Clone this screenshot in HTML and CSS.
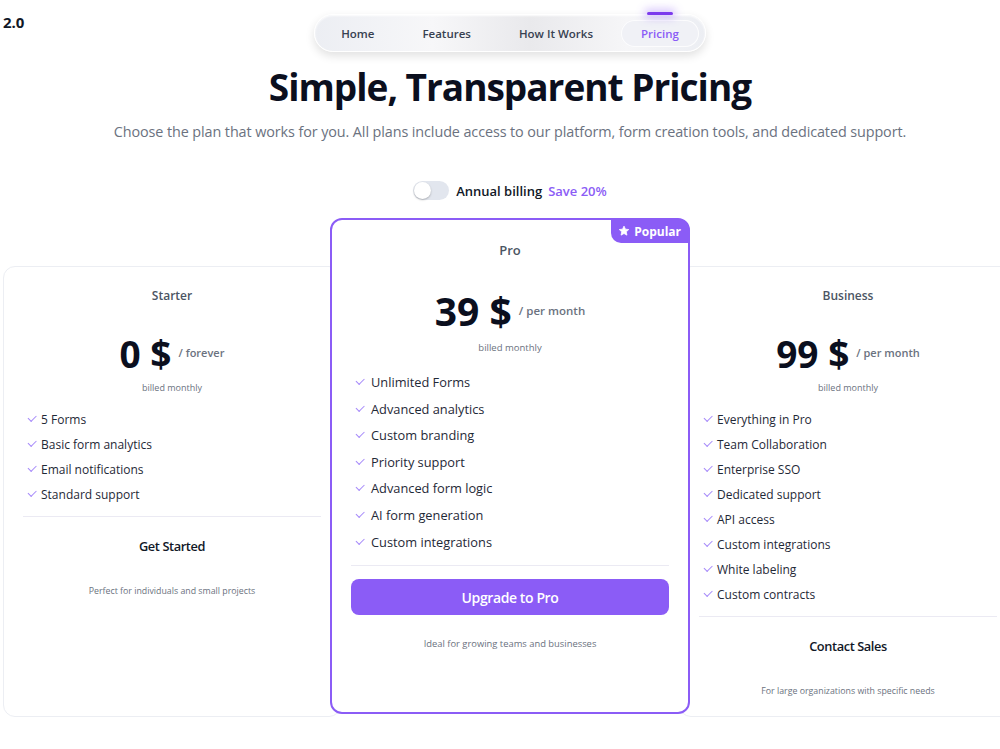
FILE: index.html
```html
<!DOCTYPE html>
<html lang="en">
<head>
    <meta charset="UTF-8">
    <meta name="viewport" content="width=device-width, initial-scale=1.0">
    <title>Pricing</title>
    <link rel="stylesheet" href="styles.css">
</head>
<body>
    <div class="version">2.0</div>

    <div class="page">
        <nav class="nav">
            <a href="#" class="nav-link">Home</a>
            <a href="#" class="nav-link">Features</a>
            <a href="#" class="nav-link">How It Works</a>
            <a href="#" class="nav-link active">Pricing</a>
        </nav>

        <section class="pricing">
            <h1>Simple, Transparent Pricing</h1>
            <p class="subtitle">Choose the plan that works for you. All plans include access to our platform, form creation tools, and dedicated support.</p>

            <div class="billing">
                <span class="switch"><span class="knob"></span></span>
                <span class="billing-label">Annual billing</span>
                <span class="save">Save 20%</span>
            </div>

            <div class="plans">
                <div class="plan">
                    <div class="plan-name">Starter</div>
                    <div class="price"><span class="amount">0 $</span><span class="period">/ forever</span></div>
                    <div class="billed">billed monthly</div>
                    <ul class="features">
                        <li>5 Forms</li>
                        <li>Basic form analytics</li>
                        <li>Email notifications</li>
                        <li>Standard support</li>
                    </ul>
                    <button class="plan-btn">Get Started</button>
                    <p class="plan-note">Perfect for individuals and small projects</p>
                </div>

                <div class="plan plan-pro">
                    <div class="badge">
                        <svg width="12" height="12" viewBox="0 0 24 24"><path fill="#fff" d="M12 2.2l2.9 6.1 6.6.8-4.9 4.6 1.3 6.6L12 17l-5.9 3.3 1.3-6.6-4.9-4.6 6.6-.8z" stroke="#fff" stroke-width="1.5" stroke-linejoin="round"/></svg>
                        Popular
                    </div>
                    <div class="plan-name">Pro</div>
                    <div class="price"><span class="amount">39 $</span><span class="period">/ per month</span></div>
                    <div class="billed">billed monthly</div>
                    <ul class="features">
                        <li>Unlimited Forms</li>
                        <li>Advanced analytics</li>
                        <li>Custom branding</li>
                        <li>Priority support</li>
                        <li>Advanced form logic</li>
                        <li>AI form generation</li>
                        <li>Custom integrations</li>
                    </ul>
                    <button class="plan-btn primary">Upgrade to Pro</button>
                    <p class="plan-note">Ideal for growing teams and businesses</p>
                </div>

                <div class="plan">
                    <div class="plan-name">Business</div>
                    <div class="price"><span class="amount">99 $</span><span class="period">/ per month</span></div>
                    <div class="billed">billed monthly</div>
                    <ul class="features">
                        <li>Everything in Pro</li>
                        <li>Team Collaboration</li>
                        <li>Enterprise SSO</li>
                        <li>Dedicated support</li>
                        <li>API access</li>
                        <li>Custom integrations</li>
                        <li>White labeling</li>
                        <li>Custom contracts</li>
                    </ul>
                    <button class="plan-btn">Contact Sales</button>
                    <p class="plan-note">For large organizations with specific needs</p>
                </div>
            </div>
        </section>
    </div>
</body>
</html>
```

FILE: styles.css
```css
html, body {
    overflow: hidden;
}
body {
    margin: 0;
    font-family: "Open Sans", sans-serif;
    color: #111827;
    background: #fff;
}
.page {
    width: 1020px;
}
.version {
    position: absolute;
    top: 12px;
    left: 3px;
    font-size: 15px;
    font-weight: 700;
}

/* top navigation pill */
.nav {
    display: flex;
    align-items: center;
    gap: 8px;
    width: fit-content;
    height: 28px;
    margin: 14px auto 0;
    padding: 4px 6px;
    border-radius: 20px;
    background: linear-gradient(90deg, #eceef3, #f7f7f9 30%, #e9e9ec 55%, #f6f6f8 80%, #eceef3);
    border: 1px solid #fff;
    box-shadow: 0 4px 10px rgba(0, 0, 0, 0.12), inset 0 1px 2px rgba(255, 255, 255, 0.9);
}
.nav-link {
    position: relative;
    padding: 6px 20px;
    font-size: 11.5px;
    font-weight: 600;
    color: #374151;
    text-decoration: none;
    border-radius: 16px;
}
.nav-link.active {
    color: #8b5cf6;
    background: #f0f1f6;
    box-shadow: inset 0 0 0 1px rgba(255, 255, 255, 0.8);
}
.nav-link.active::before {
    content: "";
    position: absolute;
    top: -8px;
    left: 50%;
    width: 26px;
    height: 3px;
    margin-left: -13px;
    border-radius: 2px;
    background: #7c3aed;
    box-shadow: 0 0 8px 3px rgba(139, 92, 246, 0.35);
}

.pricing {
    text-align: center;
}
h1 {
    margin: 12px 0 0;
    font-size: 37px;
    font-weight: 700;
    letter-spacing: -1px;
    line-height: 46px;
    color: #0b0f1e;
}
.subtitle {
    margin: 12px 0 0;
    font-size: 14.4px;
    color: #6b7280;
    letter-spacing: -0.1px;
}

/* billing toggle */
.billing {
    display: flex;
    justify-content: center;
    align-items: center;
    gap: 6px;
    margin-top: 40px;
    font-size: 13px;
    font-weight: 600;
}
.switch {
    display: inline-flex;
    align-items: center;
    width: 36px;
    height: 19px;
    margin-right: 1px;
    border-radius: 10px;
    background: #e2e6ee;
}
.knob {
    width: 17px;
    height: 17px;
    margin-left: 1px;
    border-radius: 50%;
    background: #fff;
    box-shadow: 0 1px 2px rgba(0, 0, 0, 0.25);
}
.billing-label {
    color: #111827;
}
.save {
    color: #8b5cf6;
}

/* plan cards */
.plans {
    display: flex;
    align-items: flex-start;
    width: 1014px;
    margin: 18px auto 0;
}
.plan {
    display: flex;
    flex-direction: column;
    box-sizing: border-box;
    width: 338px;
    height: 451px;
    margin-top: 48px;
    padding: 20px 19px 0;
    border: 1px solid #eceef3;
    border-radius: 12px;
    background: #fff;
}
.plan-name {
    font-size: 12px;
    font-weight: 600;
    color: #4b5563;
}
.price {
    display: flex;
    justify-content: center;
    align-items: flex-start;
    margin-top: 28px;
}
.amount {
    font-size: 37px;
    font-weight: 700;
    line-height: 44px;
    color: #0b0f1e;
}
.period {
    margin: 13px 0 0 7px;
    font-size: 11px;
    font-weight: 600;
    color: #6b7280;
}
.billed {
    margin-top: 5px;
    font-size: 9px;
    color: #6b7280;
}
.features {
    list-style: none;
    margin: 13px 0 0;
    padding: 0 0 9px;
    text-align: left;
    border-bottom: 1px solid #ebeaf3;
}
.features li {
    position: relative;
    padding-left: 18px;
    font-size: 12px;
    line-height: 25px;
    color: #1f2937;
}
.features li::before {
    content: "";
    position: absolute;
    left: 5px;
    top: 8px;
    width: 7px;
    height: 3.5px;
    border-left: 1.5px solid #a78bfa;
    border-bottom: 1.5px solid #a78bfa;
    transform: rotate(-45deg);
}
.plan-btn {
    margin-top: 17px;
    padding: 0;
    height: 24px;
    border: none;
    background: none;
    font-family: inherit;
    font-size: 12.8px;
    font-weight: 600;
    letter-spacing: -0.4px;
    color: #111827;
    cursor: pointer;
}
.plan-note {
    margin: 27px 0 0;
    font-size: 8.8px;
    color: #6b7280;
}

/* highlighted plan sits above its neighbours */
.plan-pro {
    position: relative;
    z-index: 1;
    width: 360px;
    height: 496px;
    margin: 0 -11px;
    padding: 21px 19px 0;
    border: 2px solid #8b5cf6;
}
.plan-pro .plan-name {
    font-size: 13px;
}
.plan-pro .price {
    margin-top: 30px;
}
.plan-pro .amount {
    font-size: 39px;
}
.plan-pro .period {
    margin-top: 14px;
    font-size: 11.5px;
}
.plan-pro .billed {
    margin-top: 8px;
    font-size: 9.5px;
}
.plan-pro .features {
    margin-top: 15px;
    padding-bottom: 10px;
}
.plan-pro .features li {
    font-size: 12.8px;
    line-height: 26.6px;
    padding-left: 20px;
}
.plan-pro .features li::before {
    top: 9px;
}
.plan-btn.primary {
    height: 36px;
    margin-top: 13px;
    border-radius: 8px;
    background: #8b5cf6;
    color: #fff;
    font-size: 14px;
}
.plan-pro .plan-note {
    margin-top: 22px;
    font-size: 9.4px;
}
.badge {
    position: absolute;
    top: -1px;
    right: -1px;
    display: flex;
    align-items: center;
    gap: 4px;
    padding: 0 8px 0 7px;
    height: 24px;
    border-radius: 0 11px 0 10px;
    background: #8b5cf6;
    color: #fff;
    font-size: 12px;
    font-weight: 700;
}
```
